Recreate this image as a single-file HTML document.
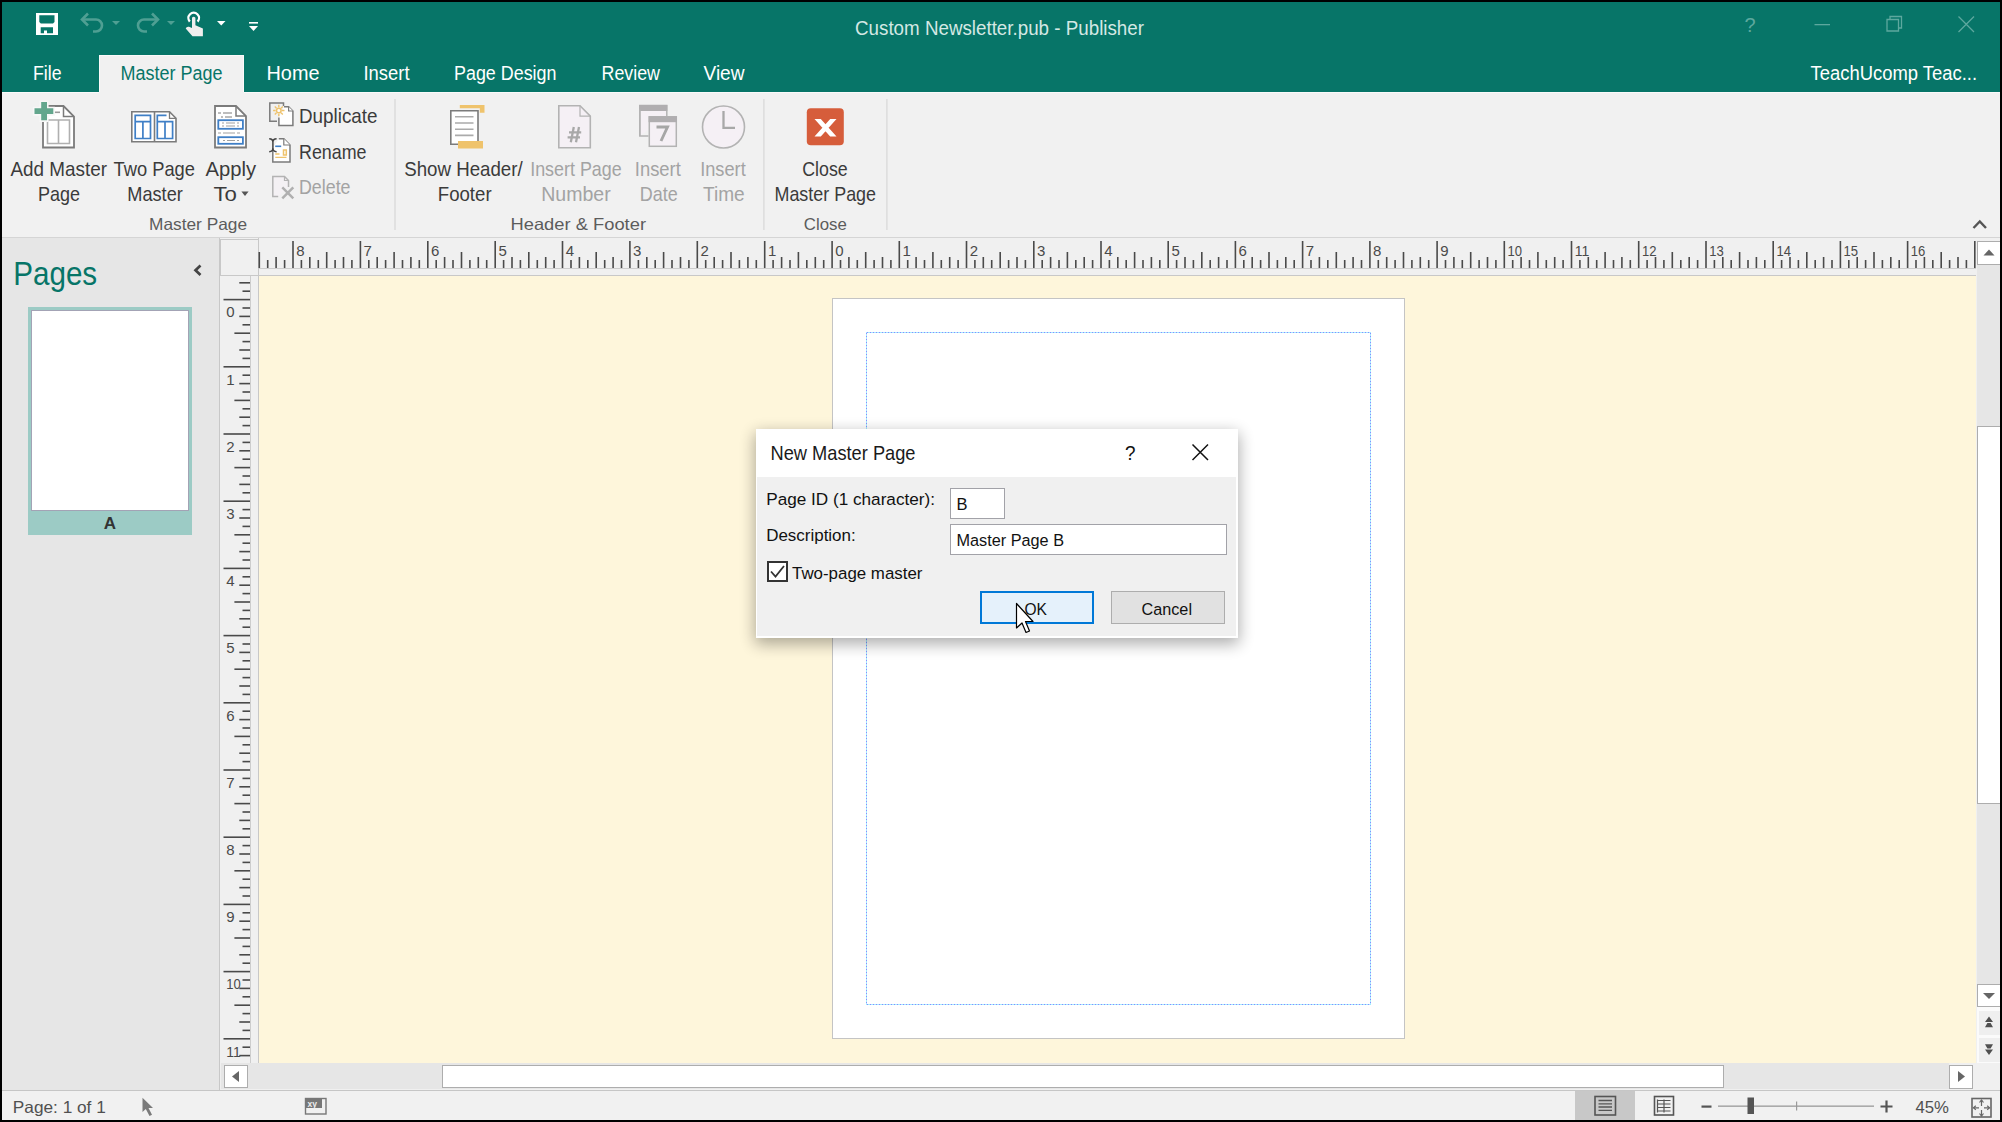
<!DOCTYPE html>
<html><head><meta charset="utf-8"><title>Publisher</title>
<style>html,body{margin:0;padding:0;overflow:hidden;background:#000;}
svg{display:block;font-family:"Liberation Sans", sans-serif;}</style></head>
<body><svg width="2002" height="1122" viewBox="0 0 2002 1122">
<rect x="0" y="0" width="2002" height="1122" fill="#000" />
<rect x="2" y="2" width="1998" height="90" fill="#077568" />
<rect x="99" y="55" width="145" height="38" fill="#fafafa" />
<rect x="100" y="56" width="143" height="37" fill="#f1f1f1" />
<rect x="2" y="92" width="1998" height="145" fill="#f1f1f1" />
<rect x="2" y="92" width="97" height="1" fill="#fafafa"/>
<rect x="244" y="92" width="1756" height="1" fill="#fafafa"/>
<rect x="2" y="237" width="1998" height="1" fill="#d5d5d5"/>
<rect x="2" y="238" width="218" height="852" fill="#e6e6e6" />
<rect x="219" y="238" width="1" height="852" fill="#c8c8c8"/>
<rect x="220" y="238" width="1780" height="852" fill="#f0f0f0" />
<rect x="2" y="1090" width="1998" height="1" fill="#c6c6c6"/>
<rect x="2" y="1091" width="1998" height="29" fill="#f1f1f1" />
<rect x="220" y="239" width="39" height="37" fill="#c8c8c8" />
<rect x="221" y="240" width="37" height="35" fill="#f0f0f0" />
<rect x="259" y="238" width="1718" height="38" fill="#f0f0f0" />
<rect x="259" y="268" width="1717" height="1" fill="#cdcdcd"/>
<rect x="220" y="275" width="1757" height="1" fill="#c8c8c8"/>
<rect x="250" y="276" width="1" height="787" fill="#cdcdcd"/>
<rect x="258" y="238" width="1" height="825" fill="#c8c8c8"/>
<rect x="259" y="276" width="1717" height="787" fill="#fef6db" />
<rect x="258.5" y="252" width="1.6" height="16" fill="#4a4a4a"/>
<rect x="266.9" y="260" width="1.6" height="8" fill="#4a4a4a"/>
<rect x="275.3" y="257" width="1.6" height="11" fill="#4a4a4a"/>
<rect x="283.8" y="260" width="1.6" height="8" fill="#4a4a4a"/>
<rect x="292.2" y="241" width="1.6" height="27" fill="#4a4a4a"/>
<rect x="300.6" y="260" width="1.6" height="8" fill="#4a4a4a"/>
<rect x="309.0" y="257" width="1.6" height="11" fill="#4a4a4a"/>
<rect x="317.5" y="260" width="1.6" height="8" fill="#4a4a4a"/>
<rect x="325.9" y="252" width="1.6" height="16" fill="#4a4a4a"/>
<rect x="334.3" y="260" width="1.6" height="8" fill="#4a4a4a"/>
<rect x="342.7" y="257" width="1.6" height="11" fill="#4a4a4a"/>
<rect x="351.1" y="260" width="1.6" height="8" fill="#4a4a4a"/>
<rect x="359.6" y="241" width="1.6" height="27" fill="#4a4a4a"/>
<rect x="368.0" y="260" width="1.6" height="8" fill="#4a4a4a"/>
<rect x="376.4" y="257" width="1.6" height="11" fill="#4a4a4a"/>
<rect x="384.8" y="260" width="1.6" height="8" fill="#4a4a4a"/>
<rect x="393.3" y="252" width="1.6" height="16" fill="#4a4a4a"/>
<rect x="401.7" y="260" width="1.6" height="8" fill="#4a4a4a"/>
<rect x="410.1" y="257" width="1.6" height="11" fill="#4a4a4a"/>
<rect x="418.5" y="260" width="1.6" height="8" fill="#4a4a4a"/>
<rect x="427.0" y="241" width="1.6" height="27" fill="#4a4a4a"/>
<rect x="435.4" y="260" width="1.6" height="8" fill="#4a4a4a"/>
<rect x="443.8" y="257" width="1.6" height="11" fill="#4a4a4a"/>
<rect x="452.2" y="260" width="1.6" height="8" fill="#4a4a4a"/>
<rect x="460.7" y="252" width="1.6" height="16" fill="#4a4a4a"/>
<rect x="469.1" y="260" width="1.6" height="8" fill="#4a4a4a"/>
<rect x="477.5" y="257" width="1.6" height="11" fill="#4a4a4a"/>
<rect x="485.9" y="260" width="1.6" height="8" fill="#4a4a4a"/>
<rect x="494.4" y="241" width="1.6" height="27" fill="#4a4a4a"/>
<rect x="502.8" y="260" width="1.6" height="8" fill="#4a4a4a"/>
<rect x="511.2" y="257" width="1.6" height="11" fill="#4a4a4a"/>
<rect x="519.6" y="260" width="1.6" height="8" fill="#4a4a4a"/>
<rect x="528.0" y="252" width="1.6" height="16" fill="#4a4a4a"/>
<rect x="536.5" y="260" width="1.6" height="8" fill="#4a4a4a"/>
<rect x="544.9" y="257" width="1.6" height="11" fill="#4a4a4a"/>
<rect x="553.3" y="260" width="1.6" height="8" fill="#4a4a4a"/>
<rect x="561.7" y="241" width="1.6" height="27" fill="#4a4a4a"/>
<rect x="570.2" y="260" width="1.6" height="8" fill="#4a4a4a"/>
<rect x="578.6" y="257" width="1.6" height="11" fill="#4a4a4a"/>
<rect x="587.0" y="260" width="1.6" height="8" fill="#4a4a4a"/>
<rect x="595.4" y="252" width="1.6" height="16" fill="#4a4a4a"/>
<rect x="603.9" y="260" width="1.6" height="8" fill="#4a4a4a"/>
<rect x="612.3" y="257" width="1.6" height="11" fill="#4a4a4a"/>
<rect x="620.7" y="260" width="1.6" height="8" fill="#4a4a4a"/>
<rect x="629.1" y="241" width="1.6" height="27" fill="#4a4a4a"/>
<rect x="637.6" y="260" width="1.6" height="8" fill="#4a4a4a"/>
<rect x="646.0" y="257" width="1.6" height="11" fill="#4a4a4a"/>
<rect x="654.4" y="260" width="1.6" height="8" fill="#4a4a4a"/>
<rect x="662.8" y="252" width="1.6" height="16" fill="#4a4a4a"/>
<rect x="671.2" y="260" width="1.6" height="8" fill="#4a4a4a"/>
<rect x="679.7" y="257" width="1.6" height="11" fill="#4a4a4a"/>
<rect x="688.1" y="260" width="1.6" height="8" fill="#4a4a4a"/>
<rect x="696.5" y="241" width="1.6" height="27" fill="#4a4a4a"/>
<rect x="704.9" y="260" width="1.6" height="8" fill="#4a4a4a"/>
<rect x="713.4" y="257" width="1.6" height="11" fill="#4a4a4a"/>
<rect x="721.8" y="260" width="1.6" height="8" fill="#4a4a4a"/>
<rect x="730.2" y="252" width="1.6" height="16" fill="#4a4a4a"/>
<rect x="738.6" y="260" width="1.6" height="8" fill="#4a4a4a"/>
<rect x="747.1" y="257" width="1.6" height="11" fill="#4a4a4a"/>
<rect x="755.5" y="260" width="1.6" height="8" fill="#4a4a4a"/>
<rect x="763.9" y="241" width="1.6" height="27" fill="#4a4a4a"/>
<rect x="772.3" y="260" width="1.6" height="8" fill="#4a4a4a"/>
<rect x="780.8" y="257" width="1.6" height="11" fill="#4a4a4a"/>
<rect x="789.2" y="260" width="1.6" height="8" fill="#4a4a4a"/>
<rect x="797.6" y="252" width="1.6" height="16" fill="#4a4a4a"/>
<rect x="806.0" y="260" width="1.6" height="8" fill="#4a4a4a"/>
<rect x="814.5" y="257" width="1.6" height="11" fill="#4a4a4a"/>
<rect x="822.9" y="260" width="1.6" height="8" fill="#4a4a4a"/>
<rect x="831.3" y="241" width="1.6" height="27" fill="#4a4a4a"/>
<rect x="839.7" y="260" width="1.6" height="8" fill="#4a4a4a"/>
<rect x="848.1" y="257" width="1.6" height="11" fill="#4a4a4a"/>
<rect x="856.5" y="260" width="1.6" height="8" fill="#4a4a4a"/>
<rect x="864.9" y="252" width="1.6" height="16" fill="#4a4a4a"/>
<rect x="873.3" y="260" width="1.6" height="8" fill="#4a4a4a"/>
<rect x="881.7" y="257" width="1.6" height="11" fill="#4a4a4a"/>
<rect x="890.1" y="260" width="1.6" height="8" fill="#4a4a4a"/>
<rect x="898.5" y="241" width="1.6" height="27" fill="#4a4a4a"/>
<rect x="906.9" y="260" width="1.6" height="8" fill="#4a4a4a"/>
<rect x="915.3" y="257" width="1.6" height="11" fill="#4a4a4a"/>
<rect x="923.7" y="260" width="1.6" height="8" fill="#4a4a4a"/>
<rect x="932.1" y="252" width="1.6" height="16" fill="#4a4a4a"/>
<rect x="940.5" y="260" width="1.6" height="8" fill="#4a4a4a"/>
<rect x="948.9" y="257" width="1.6" height="11" fill="#4a4a4a"/>
<rect x="957.3" y="260" width="1.6" height="8" fill="#4a4a4a"/>
<rect x="965.7" y="241" width="1.6" height="27" fill="#4a4a4a"/>
<rect x="974.1" y="260" width="1.6" height="8" fill="#4a4a4a"/>
<rect x="982.5" y="257" width="1.6" height="11" fill="#4a4a4a"/>
<rect x="990.9" y="260" width="1.6" height="8" fill="#4a4a4a"/>
<rect x="999.4" y="252" width="1.6" height="16" fill="#4a4a4a"/>
<rect x="1007.8" y="260" width="1.6" height="8" fill="#4a4a4a"/>
<rect x="1016.2" y="257" width="1.6" height="11" fill="#4a4a4a"/>
<rect x="1024.6" y="260" width="1.6" height="8" fill="#4a4a4a"/>
<rect x="1033.0" y="241" width="1.6" height="27" fill="#4a4a4a"/>
<rect x="1041.4" y="260" width="1.6" height="8" fill="#4a4a4a"/>
<rect x="1049.8" y="257" width="1.6" height="11" fill="#4a4a4a"/>
<rect x="1058.2" y="260" width="1.6" height="8" fill="#4a4a4a"/>
<rect x="1066.6" y="252" width="1.6" height="16" fill="#4a4a4a"/>
<rect x="1075.0" y="260" width="1.6" height="8" fill="#4a4a4a"/>
<rect x="1083.4" y="257" width="1.6" height="11" fill="#4a4a4a"/>
<rect x="1091.8" y="260" width="1.6" height="8" fill="#4a4a4a"/>
<rect x="1100.2" y="241" width="1.6" height="27" fill="#4a4a4a"/>
<rect x="1108.6" y="260" width="1.6" height="8" fill="#4a4a4a"/>
<rect x="1117.0" y="257" width="1.6" height="11" fill="#4a4a4a"/>
<rect x="1125.4" y="260" width="1.6" height="8" fill="#4a4a4a"/>
<rect x="1133.8" y="252" width="1.6" height="16" fill="#4a4a4a"/>
<rect x="1142.2" y="260" width="1.6" height="8" fill="#4a4a4a"/>
<rect x="1150.6" y="257" width="1.6" height="11" fill="#4a4a4a"/>
<rect x="1159.0" y="260" width="1.6" height="8" fill="#4a4a4a"/>
<rect x="1167.4" y="241" width="1.6" height="27" fill="#4a4a4a"/>
<rect x="1175.8" y="260" width="1.6" height="8" fill="#4a4a4a"/>
<rect x="1184.2" y="257" width="1.6" height="11" fill="#4a4a4a"/>
<rect x="1192.6" y="260" width="1.6" height="8" fill="#4a4a4a"/>
<rect x="1201.0" y="252" width="1.6" height="16" fill="#4a4a4a"/>
<rect x="1209.4" y="260" width="1.6" height="8" fill="#4a4a4a"/>
<rect x="1217.8" y="257" width="1.6" height="11" fill="#4a4a4a"/>
<rect x="1226.2" y="260" width="1.6" height="8" fill="#4a4a4a"/>
<rect x="1234.6" y="241" width="1.6" height="27" fill="#4a4a4a"/>
<rect x="1243.0" y="260" width="1.6" height="8" fill="#4a4a4a"/>
<rect x="1251.4" y="257" width="1.6" height="11" fill="#4a4a4a"/>
<rect x="1259.8" y="260" width="1.6" height="8" fill="#4a4a4a"/>
<rect x="1268.2" y="252" width="1.6" height="16" fill="#4a4a4a"/>
<rect x="1276.6" y="260" width="1.6" height="8" fill="#4a4a4a"/>
<rect x="1285.0" y="257" width="1.6" height="11" fill="#4a4a4a"/>
<rect x="1293.4" y="260" width="1.6" height="8" fill="#4a4a4a"/>
<rect x="1301.8" y="241" width="1.6" height="27" fill="#4a4a4a"/>
<rect x="1310.2" y="260" width="1.6" height="8" fill="#4a4a4a"/>
<rect x="1318.6" y="257" width="1.6" height="11" fill="#4a4a4a"/>
<rect x="1327.0" y="260" width="1.6" height="8" fill="#4a4a4a"/>
<rect x="1335.5" y="252" width="1.6" height="16" fill="#4a4a4a"/>
<rect x="1343.9" y="260" width="1.6" height="8" fill="#4a4a4a"/>
<rect x="1352.3" y="257" width="1.6" height="11" fill="#4a4a4a"/>
<rect x="1360.7" y="260" width="1.6" height="8" fill="#4a4a4a"/>
<rect x="1369.1" y="241" width="1.6" height="27" fill="#4a4a4a"/>
<rect x="1377.5" y="260" width="1.6" height="8" fill="#4a4a4a"/>
<rect x="1385.9" y="257" width="1.6" height="11" fill="#4a4a4a"/>
<rect x="1394.3" y="260" width="1.6" height="8" fill="#4a4a4a"/>
<rect x="1402.7" y="252" width="1.6" height="16" fill="#4a4a4a"/>
<rect x="1411.1" y="260" width="1.6" height="8" fill="#4a4a4a"/>
<rect x="1419.5" y="257" width="1.6" height="11" fill="#4a4a4a"/>
<rect x="1427.9" y="260" width="1.6" height="8" fill="#4a4a4a"/>
<rect x="1436.3" y="241" width="1.6" height="27" fill="#4a4a4a"/>
<rect x="1444.7" y="260" width="1.6" height="8" fill="#4a4a4a"/>
<rect x="1453.1" y="257" width="1.6" height="11" fill="#4a4a4a"/>
<rect x="1461.5" y="260" width="1.6" height="8" fill="#4a4a4a"/>
<rect x="1469.9" y="252" width="1.6" height="16" fill="#4a4a4a"/>
<rect x="1478.3" y="260" width="1.6" height="8" fill="#4a4a4a"/>
<rect x="1486.7" y="257" width="1.6" height="11" fill="#4a4a4a"/>
<rect x="1495.1" y="260" width="1.6" height="8" fill="#4a4a4a"/>
<rect x="1503.5" y="241" width="1.6" height="27" fill="#4a4a4a"/>
<rect x="1511.9" y="260" width="1.6" height="8" fill="#4a4a4a"/>
<rect x="1520.3" y="257" width="1.6" height="11" fill="#4a4a4a"/>
<rect x="1528.7" y="260" width="1.6" height="8" fill="#4a4a4a"/>
<rect x="1537.1" y="252" width="1.6" height="16" fill="#4a4a4a"/>
<rect x="1545.5" y="260" width="1.6" height="8" fill="#4a4a4a"/>
<rect x="1553.9" y="257" width="1.6" height="11" fill="#4a4a4a"/>
<rect x="1562.3" y="260" width="1.6" height="8" fill="#4a4a4a"/>
<rect x="1570.7" y="241" width="1.6" height="27" fill="#4a4a4a"/>
<rect x="1579.1" y="260" width="1.6" height="8" fill="#4a4a4a"/>
<rect x="1587.5" y="257" width="1.6" height="11" fill="#4a4a4a"/>
<rect x="1595.9" y="260" width="1.6" height="8" fill="#4a4a4a"/>
<rect x="1604.3" y="252" width="1.6" height="16" fill="#4a4a4a"/>
<rect x="1612.7" y="260" width="1.6" height="8" fill="#4a4a4a"/>
<rect x="1621.1" y="257" width="1.6" height="11" fill="#4a4a4a"/>
<rect x="1629.5" y="260" width="1.6" height="8" fill="#4a4a4a"/>
<rect x="1637.9" y="241" width="1.6" height="27" fill="#4a4a4a"/>
<rect x="1646.3" y="260" width="1.6" height="8" fill="#4a4a4a"/>
<rect x="1654.7" y="257" width="1.6" height="11" fill="#4a4a4a"/>
<rect x="1663.1" y="260" width="1.6" height="8" fill="#4a4a4a"/>
<rect x="1671.5" y="252" width="1.6" height="16" fill="#4a4a4a"/>
<rect x="1680.0" y="260" width="1.6" height="8" fill="#4a4a4a"/>
<rect x="1688.4" y="257" width="1.6" height="11" fill="#4a4a4a"/>
<rect x="1696.8" y="260" width="1.6" height="8" fill="#4a4a4a"/>
<rect x="1705.2" y="241" width="1.6" height="27" fill="#4a4a4a"/>
<rect x="1713.6" y="260" width="1.6" height="8" fill="#4a4a4a"/>
<rect x="1722.0" y="257" width="1.6" height="11" fill="#4a4a4a"/>
<rect x="1730.4" y="260" width="1.6" height="8" fill="#4a4a4a"/>
<rect x="1738.8" y="252" width="1.6" height="16" fill="#4a4a4a"/>
<rect x="1747.2" y="260" width="1.6" height="8" fill="#4a4a4a"/>
<rect x="1755.6" y="257" width="1.6" height="11" fill="#4a4a4a"/>
<rect x="1764.0" y="260" width="1.6" height="8" fill="#4a4a4a"/>
<rect x="1772.4" y="241" width="1.6" height="27" fill="#4a4a4a"/>
<rect x="1780.8" y="260" width="1.6" height="8" fill="#4a4a4a"/>
<rect x="1789.2" y="257" width="1.6" height="11" fill="#4a4a4a"/>
<rect x="1797.6" y="260" width="1.6" height="8" fill="#4a4a4a"/>
<rect x="1806.0" y="252" width="1.6" height="16" fill="#4a4a4a"/>
<rect x="1814.4" y="260" width="1.6" height="8" fill="#4a4a4a"/>
<rect x="1822.8" y="257" width="1.6" height="11" fill="#4a4a4a"/>
<rect x="1831.2" y="260" width="1.6" height="8" fill="#4a4a4a"/>
<rect x="1839.6" y="241" width="1.6" height="27" fill="#4a4a4a"/>
<rect x="1848.0" y="260" width="1.6" height="8" fill="#4a4a4a"/>
<rect x="1856.4" y="257" width="1.6" height="11" fill="#4a4a4a"/>
<rect x="1864.8" y="260" width="1.6" height="8" fill="#4a4a4a"/>
<rect x="1873.2" y="252" width="1.6" height="16" fill="#4a4a4a"/>
<rect x="1881.6" y="260" width="1.6" height="8" fill="#4a4a4a"/>
<rect x="1890.0" y="257" width="1.6" height="11" fill="#4a4a4a"/>
<rect x="1898.4" y="260" width="1.6" height="8" fill="#4a4a4a"/>
<rect x="1906.8" y="241" width="1.6" height="27" fill="#4a4a4a"/>
<rect x="1915.2" y="260" width="1.6" height="8" fill="#4a4a4a"/>
<rect x="1923.6" y="257" width="1.6" height="11" fill="#4a4a4a"/>
<rect x="1932.0" y="260" width="1.6" height="8" fill="#4a4a4a"/>
<rect x="1940.4" y="252" width="1.6" height="16" fill="#4a4a4a"/>
<rect x="1948.8" y="260" width="1.6" height="8" fill="#4a4a4a"/>
<rect x="1957.2" y="257" width="1.6" height="11" fill="#4a4a4a"/>
<rect x="1965.6" y="260" width="1.6" height="8" fill="#4a4a4a"/>
<rect x="1974.0" y="241" width="1.6" height="27" fill="#4a4a4a"/>
<text x="296.2" y="255.6" font-size="15" fill="#4a4a4a" >8</text>
<text x="363.6" y="255.6" font-size="15" fill="#4a4a4a" >7</text>
<text x="431.0" y="255.6" font-size="15" fill="#4a4a4a" >6</text>
<text x="498.4" y="255.6" font-size="15" fill="#4a4a4a" >5</text>
<text x="565.7" y="255.6" font-size="15" fill="#4a4a4a" >4</text>
<text x="633.1" y="255.6" font-size="15" fill="#4a4a4a" >3</text>
<text x="700.5" y="255.6" font-size="15" fill="#4a4a4a" >2</text>
<text x="767.9" y="255.6" font-size="15" fill="#4a4a4a" >1</text>
<text x="835.3" y="255.6" font-size="15" fill="#4a4a4a" >0</text>
<text x="902.5" y="255.6" font-size="15" fill="#4a4a4a" >1</text>
<text x="969.7" y="255.6" font-size="15" fill="#4a4a4a" >2</text>
<text x="1037.0" y="255.6" font-size="15" fill="#4a4a4a" >3</text>
<text x="1104.2" y="255.6" font-size="15" fill="#4a4a4a" >4</text>
<text x="1171.4" y="255.6" font-size="15" fill="#4a4a4a" >5</text>
<text x="1238.6" y="255.6" font-size="15" fill="#4a4a4a" >6</text>
<text x="1305.8" y="255.6" font-size="15" fill="#4a4a4a" >7</text>
<text x="1373.1" y="255.6" font-size="15" fill="#4a4a4a" >8</text>
<text x="1440.3" y="255.6" font-size="15" fill="#4a4a4a" >9</text>
<text x="1507.5" y="255.6" font-size="15" fill="#4a4a4a" textLength="14.5" lengthAdjust="spacingAndGlyphs" >10</text>
<text x="1574.7" y="255.6" font-size="15" fill="#4a4a4a" textLength="14.5" lengthAdjust="spacingAndGlyphs" >11</text>
<text x="1641.9" y="255.6" font-size="15" fill="#4a4a4a" textLength="14.5" lengthAdjust="spacingAndGlyphs" >12</text>
<text x="1709.2" y="255.6" font-size="15" fill="#4a4a4a" textLength="14.5" lengthAdjust="spacingAndGlyphs" >13</text>
<text x="1776.4" y="255.6" font-size="15" fill="#4a4a4a" textLength="14.5" lengthAdjust="spacingAndGlyphs" >14</text>
<text x="1843.6" y="255.6" font-size="15" fill="#4a4a4a" textLength="14.5" lengthAdjust="spacingAndGlyphs" >15</text>
<text x="1910.8" y="255.6" font-size="15" fill="#4a4a4a" textLength="14.5" lengthAdjust="spacingAndGlyphs" >16</text>
<rect x="239.3" y="282.0" width="10.7" height="1.6" fill="#4a4a4a"/>
<rect x="242.5" y="290.4" width="7.5" height="1.6" fill="#4a4a4a"/>
<rect x="223.5" y="298.8" width="26.5" height="1.6" fill="#4a4a4a"/>
<rect x="242.5" y="307.2" width="7.5" height="1.6" fill="#4a4a4a"/>
<rect x="239.3" y="315.6" width="10.7" height="1.6" fill="#4a4a4a"/>
<rect x="242.5" y="324.0" width="7.5" height="1.6" fill="#4a4a4a"/>
<rect x="234.4" y="332.4" width="15.6" height="1.6" fill="#4a4a4a"/>
<rect x="242.5" y="340.8" width="7.5" height="1.6" fill="#4a4a4a"/>
<rect x="239.3" y="349.2" width="10.7" height="1.6" fill="#4a4a4a"/>
<rect x="242.5" y="357.6" width="7.5" height="1.6" fill="#4a4a4a"/>
<rect x="223.5" y="366.0" width="26.5" height="1.6" fill="#4a4a4a"/>
<rect x="242.5" y="374.4" width="7.5" height="1.6" fill="#4a4a4a"/>
<rect x="239.3" y="382.8" width="10.7" height="1.6" fill="#4a4a4a"/>
<rect x="242.5" y="391.2" width="7.5" height="1.6" fill="#4a4a4a"/>
<rect x="234.4" y="399.6" width="15.6" height="1.6" fill="#4a4a4a"/>
<rect x="242.5" y="408.0" width="7.5" height="1.6" fill="#4a4a4a"/>
<rect x="239.3" y="416.4" width="10.7" height="1.6" fill="#4a4a4a"/>
<rect x="242.5" y="424.8" width="7.5" height="1.6" fill="#4a4a4a"/>
<rect x="223.5" y="433.2" width="26.5" height="1.6" fill="#4a4a4a"/>
<rect x="242.5" y="441.6" width="7.5" height="1.6" fill="#4a4a4a"/>
<rect x="239.3" y="450.0" width="10.7" height="1.6" fill="#4a4a4a"/>
<rect x="242.5" y="458.4" width="7.5" height="1.6" fill="#4a4a4a"/>
<rect x="234.4" y="466.8" width="15.6" height="1.6" fill="#4a4a4a"/>
<rect x="242.5" y="475.2" width="7.5" height="1.6" fill="#4a4a4a"/>
<rect x="239.3" y="483.6" width="10.7" height="1.6" fill="#4a4a4a"/>
<rect x="242.5" y="492.0" width="7.5" height="1.6" fill="#4a4a4a"/>
<rect x="223.5" y="500.4" width="26.5" height="1.6" fill="#4a4a4a"/>
<rect x="242.5" y="508.8" width="7.5" height="1.6" fill="#4a4a4a"/>
<rect x="239.3" y="517.2" width="10.7" height="1.6" fill="#4a4a4a"/>
<rect x="242.5" y="525.6" width="7.5" height="1.6" fill="#4a4a4a"/>
<rect x="234.4" y="534.0" width="15.6" height="1.6" fill="#4a4a4a"/>
<rect x="242.5" y="542.4" width="7.5" height="1.6" fill="#4a4a4a"/>
<rect x="239.3" y="550.8" width="10.7" height="1.6" fill="#4a4a4a"/>
<rect x="242.5" y="559.2" width="7.5" height="1.6" fill="#4a4a4a"/>
<rect x="223.5" y="567.6" width="26.5" height="1.6" fill="#4a4a4a"/>
<rect x="242.5" y="576.0" width="7.5" height="1.6" fill="#4a4a4a"/>
<rect x="239.3" y="584.4" width="10.7" height="1.6" fill="#4a4a4a"/>
<rect x="242.5" y="592.8" width="7.5" height="1.6" fill="#4a4a4a"/>
<rect x="234.4" y="601.2" width="15.6" height="1.6" fill="#4a4a4a"/>
<rect x="242.5" y="609.6" width="7.5" height="1.6" fill="#4a4a4a"/>
<rect x="239.3" y="618.0" width="10.7" height="1.6" fill="#4a4a4a"/>
<rect x="242.5" y="626.4" width="7.5" height="1.6" fill="#4a4a4a"/>
<rect x="223.5" y="634.8" width="26.5" height="1.6" fill="#4a4a4a"/>
<rect x="242.5" y="643.2" width="7.5" height="1.6" fill="#4a4a4a"/>
<rect x="239.3" y="651.6" width="10.7" height="1.6" fill="#4a4a4a"/>
<rect x="242.5" y="660.0" width="7.5" height="1.6" fill="#4a4a4a"/>
<rect x="234.4" y="668.4" width="15.6" height="1.6" fill="#4a4a4a"/>
<rect x="242.5" y="676.8" width="7.5" height="1.6" fill="#4a4a4a"/>
<rect x="239.3" y="685.2" width="10.7" height="1.6" fill="#4a4a4a"/>
<rect x="242.5" y="693.6" width="7.5" height="1.6" fill="#4a4a4a"/>
<rect x="223.5" y="702.0" width="26.5" height="1.6" fill="#4a4a4a"/>
<rect x="242.5" y="710.4" width="7.5" height="1.6" fill="#4a4a4a"/>
<rect x="239.3" y="718.8" width="10.7" height="1.6" fill="#4a4a4a"/>
<rect x="242.5" y="727.2" width="7.5" height="1.6" fill="#4a4a4a"/>
<rect x="234.4" y="735.6" width="15.6" height="1.6" fill="#4a4a4a"/>
<rect x="242.5" y="744.0" width="7.5" height="1.6" fill="#4a4a4a"/>
<rect x="239.3" y="752.4" width="10.7" height="1.6" fill="#4a4a4a"/>
<rect x="242.5" y="760.8" width="7.5" height="1.6" fill="#4a4a4a"/>
<rect x="223.5" y="769.2" width="26.5" height="1.6" fill="#4a4a4a"/>
<rect x="242.5" y="777.6" width="7.5" height="1.6" fill="#4a4a4a"/>
<rect x="239.3" y="786.0" width="10.7" height="1.6" fill="#4a4a4a"/>
<rect x="242.5" y="794.4" width="7.5" height="1.6" fill="#4a4a4a"/>
<rect x="234.4" y="802.8" width="15.6" height="1.6" fill="#4a4a4a"/>
<rect x="242.5" y="811.2" width="7.5" height="1.6" fill="#4a4a4a"/>
<rect x="239.3" y="819.6" width="10.7" height="1.6" fill="#4a4a4a"/>
<rect x="242.5" y="828.0" width="7.5" height="1.6" fill="#4a4a4a"/>
<rect x="223.5" y="836.4" width="26.5" height="1.6" fill="#4a4a4a"/>
<rect x="242.5" y="844.8" width="7.5" height="1.6" fill="#4a4a4a"/>
<rect x="239.3" y="853.2" width="10.7" height="1.6" fill="#4a4a4a"/>
<rect x="242.5" y="861.6" width="7.5" height="1.6" fill="#4a4a4a"/>
<rect x="234.4" y="870.0" width="15.6" height="1.6" fill="#4a4a4a"/>
<rect x="242.5" y="878.4" width="7.5" height="1.6" fill="#4a4a4a"/>
<rect x="239.3" y="886.8" width="10.7" height="1.6" fill="#4a4a4a"/>
<rect x="242.5" y="895.2" width="7.5" height="1.6" fill="#4a4a4a"/>
<rect x="223.5" y="903.6" width="26.5" height="1.6" fill="#4a4a4a"/>
<rect x="242.5" y="912.0" width="7.5" height="1.6" fill="#4a4a4a"/>
<rect x="239.3" y="920.4" width="10.7" height="1.6" fill="#4a4a4a"/>
<rect x="242.5" y="928.8" width="7.5" height="1.6" fill="#4a4a4a"/>
<rect x="234.4" y="937.2" width="15.6" height="1.6" fill="#4a4a4a"/>
<rect x="242.5" y="945.6" width="7.5" height="1.6" fill="#4a4a4a"/>
<rect x="239.3" y="954.0" width="10.7" height="1.6" fill="#4a4a4a"/>
<rect x="242.5" y="962.4" width="7.5" height="1.6" fill="#4a4a4a"/>
<rect x="223.5" y="970.8" width="26.5" height="1.6" fill="#4a4a4a"/>
<rect x="242.5" y="979.2" width="7.5" height="1.6" fill="#4a4a4a"/>
<rect x="239.3" y="987.6" width="10.7" height="1.6" fill="#4a4a4a"/>
<rect x="242.5" y="996.0" width="7.5" height="1.6" fill="#4a4a4a"/>
<rect x="234.4" y="1004.4" width="15.6" height="1.6" fill="#4a4a4a"/>
<rect x="242.5" y="1012.8" width="7.5" height="1.6" fill="#4a4a4a"/>
<rect x="239.3" y="1021.2" width="10.7" height="1.6" fill="#4a4a4a"/>
<rect x="242.5" y="1029.6" width="7.5" height="1.6" fill="#4a4a4a"/>
<rect x="223.5" y="1038.0" width="26.5" height="1.6" fill="#4a4a4a"/>
<rect x="242.5" y="1046.4" width="7.5" height="1.6" fill="#4a4a4a"/>
<rect x="239.3" y="1054.8" width="10.7" height="1.6" fill="#4a4a4a"/>
<text x="226.2" y="317.4" font-size="15" fill="#4a4a4a" >0</text>
<text x="226.2" y="384.6" font-size="15" fill="#4a4a4a" >1</text>
<text x="226.2" y="451.8" font-size="15" fill="#4a4a4a" >2</text>
<text x="226.2" y="519.0" font-size="15" fill="#4a4a4a" >3</text>
<text x="226.2" y="586.2" font-size="15" fill="#4a4a4a" >4</text>
<text x="226.2" y="653.4" font-size="15" fill="#4a4a4a" >5</text>
<text x="226.2" y="720.6" font-size="15" fill="#4a4a4a" >6</text>
<text x="226.2" y="787.8" font-size="15" fill="#4a4a4a" >7</text>
<text x="226.2" y="855.0" font-size="15" fill="#4a4a4a" >8</text>
<text x="226.2" y="922.2" font-size="15" fill="#4a4a4a" >9</text>
<text x="226.2" y="989.4" font-size="15" fill="#4a4a4a" textLength="14.5" lengthAdjust="spacingAndGlyphs" >10</text>
<text x="226.2" y="1056.6" font-size="15" fill="#4a4a4a" textLength="14.5" lengthAdjust="spacingAndGlyphs" >11</text>
<rect x="832" y="298" width="573" height="741" fill="#c4c4c4" />
<rect x="833" y="299" width="571" height="739" fill="#ffffff" />
<defs><pattern id="gh" x="0" y="0" width="3" height="1" patternUnits="userSpaceOnUse"><rect width="3" height="1" fill="#a6ecff"/><rect width="1" height="1" fill="#8a8aff"/></pattern><pattern id="gv" x="0" y="0" width="1" height="3" patternUnits="userSpaceOnUse"><rect width="1" height="3" fill="#a6ecff"/><rect width="1" height="1" fill="#8a8aff"/></pattern></defs>
<g shape-rendering="crispEdges"><rect x="866" y="332" width="505" height="1" fill="url(#gh)"/><rect x="866" y="1004" width="505" height="1" fill="url(#gh)"/><rect x="866" y="332" width="1" height="673" fill="url(#gv)"/><rect x="1370" y="332" width="1" height="673" fill="url(#gv)"/></g>
<rect x="1977" y="238" width="23" height="825" fill="#e6e6e6" />
<rect x="1977" y="238" width="23" height="3" fill="#f0f0f0" />
<rect x="1976" y="238" width="1" height="825" fill="#f0f0f0"/>
<rect x="1977" y="241" width="24" height="24" fill="#adadad" />
<rect x="1978" y="242" width="22" height="22" fill="#ffffff" />
<path d="M1983.5 255.5 L1989 249.5 L1994.5 255.5 Z" fill="#666"/>
<rect x="1977" y="426" width="24" height="378" fill="#adadad" />
<rect x="1978" y="427" width="22" height="376" fill="#ffffff" />
<rect x="1977" y="984" width="24" height="23" fill="#adadad" />
<rect x="1978" y="985" width="22" height="21" fill="#ffffff" />
<path d="M1983 993 L1989 999 L1995 993 Z" fill="#666"/>
<rect x="1977" y="1007" width="23" height="56" fill="#fbfbfb" />
<rect x="1979" y="1011" width="21" height="24" fill="#efefef" />
<rect x="1979" y="1038" width="21" height="24" fill="#efefef" />
<path d="M1985 1022 L1989 1016.5 L1993 1022 Z M1985 1027.2 L1987.4 1023 H1990.6 L1993 1027.2 Z" fill="#505050"/>
<path d="M1985 1044.3 H1993 L1990.6 1048.5 H1987.4 Z M1985 1049.5 H1993 L1989 1055 Z" fill="#505050"/>
<rect x="220" y="1063" width="1780" height="27" fill="#f0f0f0" />
<rect x="221" y="1063" width="1728" height="26" fill="#e6e6e6" />
<rect x="224" y="1065" width="24" height="23" fill="#adadad" />
<rect x="225" y="1066" width="22" height="21" fill="#ffffff" />
<path d="M239 1071 L232 1076.5 L239 1082 Z" fill="#666"/>
<rect x="442" y="1065" width="1282" height="23" fill="#adadad" />
<rect x="443" y="1066" width="1280" height="21" fill="#ffffff" />
<rect x="1949" y="1065" width="24" height="24" fill="#adadad" />
<rect x="1950" y="1066" width="22" height="22" fill="#ffffff" />
<path d="M1958 1071 L1965 1076.5 L1958 1082 Z" fill="#666"/>
<text x="13.2" y="284.6" font-size="33.5" fill="#077568" textLength="84" lengthAdjust="spacingAndGlyphs" >Pages</text>
<path d="M200.5 265.5 L195.5 270.2 L200.5 275" fill="none" stroke="#444" stroke-width="2.7"/>
<rect x="28" y="307" width="164" height="228" fill="#9ccbc5" />
<rect x="31" y="310" width="158" height="201" fill="#a3a3b5" />
<rect x="32" y="311" width="156" height="199" fill="#ffffff" />
<text x="110" y="529" font-size="17" fill="#333333" text-anchor="middle" font-weight="bold" >A</text>
<rect x="36" y="13" width="22" height="22" fill="#fff"/>
<path d="M39.3 15.3 H54.5 V22 L53 23.5 H40.8 L39.3 22 Z" fill="#077568"/>
<path d="M40.7 27.3 H53 V33.2 H47 V30.5 H44 V33.2 H40.7 Z" fill="#077568"/>
<path d="M83 19.5 H96 A6 6 0 0 1 96 31.5 H93" fill="none" stroke="#4f9f93" stroke-width="2.6"/>
<path d="M88 13.5 L82 19.5 L88 25.5" fill="none" stroke="#4f9f93" stroke-width="2.6"/>
<path d="M112 21 L120 21 L116 25 Z" fill="#4f9f93"/>
<path d="M157 19.5 H144 A6 6 0 0 0 144 31.5 H147" fill="none" stroke="#4f9f93" stroke-width="2.6"/>
<path d="M152 13.5 L158 19.5 L152 25.5" fill="none" stroke="#4f9f93" stroke-width="2.6"/>
<path d="M167 21 L175 21 L171 25 Z" fill="#4f9f93"/>
<path d="M189.8 21.6 A5.3 5.3 0 1 1 197.6 21.6" fill="none" stroke="#fff" stroke-width="2.3"/>
<path d="M192 17.8 Q193.7 15.8 195.4 17.8 V25.3 L202.9 28.6 V36.3 H192.5 L185.7 28.6 Q186.5 26.3 189 26.8 L192 28 Z" fill="#f0eeee"/>
<path d="M217 21 L225.5 21 L221.25 25.5 Z" fill="#fff"/>
<rect x="249" y="22" width="9" height="1.6" fill="#fff"/>
<path d="M249 26 L258 26 L253.5 31 Z" fill="#fff"/>
<text x="855" y="34.9" font-size="19.5" fill="#d4e8e4" textLength="289" lengthAdjust="spacingAndGlyphs" >Custom Newsletter.pub - Publisher</text>
<text x="1744.5" y="31.5" font-size="20" fill="#5da89e" >?</text>
<rect x="1814.5" y="24" width="15.5" height="1.3" fill="#5da89e"/>
<path d="M1887 19.5 H1898.5 V31 H1887 Z M1890 19.5 V16.5 H1901.5 V28 H1898.5" fill="none" stroke="#5da89e" stroke-width="1.3"/>
<path d="M1958.5 16.5 L1974 32 M1974 16.5 L1958.5 32" fill="none" stroke="#5da89e" stroke-width="1.3"/>
<text x="33" y="79.6" font-size="19.6" fill="#ffffff" textLength="28.5" lengthAdjust="spacingAndGlyphs" >File</text>
<text x="120.5" y="79.6" font-size="19.6" fill="#077568" textLength="102" lengthAdjust="spacingAndGlyphs" >Master Page</text>
<text x="266.5" y="79.6" font-size="19.6" fill="#ffffff" textLength="53" lengthAdjust="spacingAndGlyphs" >Home</text>
<text x="363.5" y="79.6" font-size="19.6" fill="#ffffff" textLength="46" lengthAdjust="spacingAndGlyphs" >Insert</text>
<text x="454" y="79.6" font-size="19.6" fill="#ffffff" textLength="102.5" lengthAdjust="spacingAndGlyphs" >Page Design</text>
<text x="601.5" y="79.6" font-size="19.6" fill="#ffffff" textLength="58.5" lengthAdjust="spacingAndGlyphs" >Review</text>
<text x="703.5" y="79.6" font-size="19.6" fill="#ffffff" textLength="41" lengthAdjust="spacingAndGlyphs" >View</text>
<text x="1810.5" y="79.6" font-size="19.6" fill="#ffffff" textLength="166.5" lengthAdjust="spacingAndGlyphs" >TeachUcomp Teac...</text>
<path d="M43 106 H63.5 L74 116.5 V147.5 H43 Z" fill="#fff" stroke="#7b7b7b" stroke-width="1.8"/>
<path d="M63.5 106 V116.5 H74" fill="none" stroke="#7b7b7b" stroke-width="1.5"/>
<path d="M47.5 120 H69.5 V143.5 H47.5 Z M58.5 120 V143.5" fill="none" stroke="#b0b0b0" stroke-width="1.6"/>
<rect x="54.5" y="111.5" width="5.5" height="1.6" fill="#9a9a9a"/>
<path d="M41.2 102 H47 V108.3 H53.3 V114.1 H47 V120.3 H41.2 V114.1 H34.5 V108.3 H41.2 Z" fill="#63a68d" stroke="#f7f7f7" stroke-width="3.2" paint-order="stroke"/>
<text x="10.5" y="175.7" font-size="20.3" fill="#3b3b3b" textLength="96.5" lengthAdjust="spacingAndGlyphs" >Add Master</text>
<text x="59" y="200.9" font-size="20.3" fill="#3b3b3b" textLength="42" lengthAdjust="spacingAndGlyphs" text-anchor="middle" >Page</text>
<path d="M131.8 111.8 H169.5 L176 118.3 V141.8 H131.8 Z M154.5 111.8 V141.8" fill="#fff" stroke="#7b7b7b" stroke-width="1.6"/>
<path d="M169.5 111.8 V118.3 H176" fill="none" stroke="#7b7b7b" stroke-width="1.3"/>
<path d="M135.2 115.3 H150.5 V138.5 H135.2 Z M135.2 121.6 H150.5 M142.9 121.6 V138.5" fill="none" stroke="#3f7fc6" stroke-width="1.7"/>
<path d="M157.3 138.5 V115.3 H166.5 M157.3 121.6 H172.6 V138.5 H157.3 Z M165 121.6 V138.5" fill="none" stroke="#3f7fc6" stroke-width="1.7"/>
<text x="113.5" y="175.7" font-size="20.3" fill="#3b3b3b" textLength="81.5" lengthAdjust="spacingAndGlyphs" >Two Page</text>
<text x="127.3" y="200.9" font-size="20.3" fill="#3b3b3b" textLength="55.5" lengthAdjust="spacingAndGlyphs" >Master</text>
<path d="M215 106 H236 L246 116 V147.5 H215 Z" fill="#fff" stroke="#7b7b7b" stroke-width="1.8"/>
<path d="M236 106 V116 H246" fill="none" stroke="#7b7b7b" stroke-width="1.5"/>
<path d="M218 113 H221 M223 113 H232 M221 117 H223 M225 117 H232" stroke="#a8a8a8" stroke-width="1.3"/>
<rect x="218.3" y="120.2" width="24.6" height="8.6" fill="none" stroke="#3f7fc6" stroke-width="1.8"/>
<rect x="218.3" y="137.2" width="24.6" height="6.6" fill="none" stroke="#3f7fc6" stroke-width="1.8"/>
<path d="M222 123 H224 M226 123 H235 M237 123 H239 M222 126 H224 M226 126 H235 M237 126 H239 M218 133 H221 M223 133 H235 M237 133 H240 M223 140.5 H225 M227 140.5 H235 M237 140.5 H239" stroke="#a0a0a0" stroke-width="1.2"/>
<text x="205.5" y="175.7" font-size="20.3" fill="#3b3b3b" textLength="50.5" lengthAdjust="spacingAndGlyphs" >Apply</text>
<text x="213.5" y="200.9" font-size="20.3" fill="#3b3b3b" textLength="23.5" lengthAdjust="spacingAndGlyphs" >To</text>
<path d="M241.4 191.6 H248.6 L245 196 Z" fill="#555"/>
<path d="M277 121.2 H269.8 V102.9 H283.5 V106" fill="none" stroke="#7b7b7b" stroke-width="1.5"/>
<path d="M278.9 117.5 V125.6 H292.9 V111 L288.6 106.8 H284" fill="#fff" stroke="#7b7b7b" stroke-width="1.5"/>
<path d="M288.6 106.8 V111 H292.9" fill="#fff" stroke="#7b7b7b" stroke-width="1.2"/>
<g stroke="#efc36c" stroke-width="1.4"><path d="M278.8 104.8 V107.3 M278.8 113.7 V116.2 M273.1 110.5 H275.6 M282 110.5 H284.5 M274.8 106.5 L276.5 108.2 M281.1 112.8 L282.8 114.5 M282.8 106.5 L281.1 108.2 M276.5 112.8 L274.8 114.5"/></g>
<circle cx="278.8" cy="110.5" r="2.3" fill="#fff" stroke="#efc36c" stroke-width="1.5"/>
<text x="299" y="122.5" font-size="20.3" fill="#3b3b3b" textLength="78.5" lengthAdjust="spacingAndGlyphs" >Duplicate</text>
<path d="M278.8 138.8 H283.8 L290 145 V161.9 H272.8 V148" fill="#fff" stroke="#7b7b7b" stroke-width="1.5"/>
<path d="M283.8 138.8 V145 H290" fill="#fff" stroke="#7b7b7b" stroke-width="1.2"/>
<path d="M269.2 138.8 Q272.9 139 272.9 142 Q272.9 139 276.6 138.8 M272.9 142 V148.5 M269.2 151.7 Q272.9 151.5 272.9 148.5 Q272.9 151.5 276.6 151.7" fill="none" stroke="#444" stroke-width="1.5"/>
<rect x="275.2" y="145.5" width="6" height="1.6" fill="#3f7fc6"/>
<path d="M283.5 150 H286.3 V155 H283.5 Z" fill="none" stroke="#efc36c" stroke-width="1.5"/>
<path d="M275.3 154 H279.5 M275.3 157.4 H286.5" stroke="#efc36c" stroke-width="1.4"/>
<text x="299" y="158.6" font-size="20.3" fill="#3b3b3b" textLength="67.5" lengthAdjust="spacingAndGlyphs" >Rename</text>
<path d="M278.2 196.5 H272.8 V176.5 H284.5 L288.5 180.5 V187" fill="#f4f1f4" stroke="#b3b3b3" stroke-width="1.5"/>
<path d="M284.5 176.5 V180.5 H288.5" fill="none" stroke="#b3b3b3" stroke-width="1.2"/>
<path d="M282.3 187.3 L293.3 198.3 M293.3 187.3 L282.3 198.3" stroke="#b0b0b0" stroke-width="2.5"/>
<text x="299" y="194.2" font-size="20.3" fill="#a3a3a3" textLength="51.5" lengthAdjust="spacingAndGlyphs" >Delete</text>
<text x="149" y="229.7" font-size="16.5" fill="#5c5c5c" textLength="98" lengthAdjust="spacingAndGlyphs" >Master Page</text>
<rect x="394.5" y="99" width="1" height="131" fill="#d2d2d2"/>
<path d="M459.8 105 H484.5 V112.7 H479.8 V108.2 H459.8 Z" fill="#efc36c"/>
<path d="M450.8 110.8 H478 V144.2 H450.8 Z" fill="#fff" stroke="#7b7b7b" stroke-width="1.6"/>
<path d="M455 116.8 H473.5 M455 123 H473.5 M455 129.2 H473.5 M455 135.4 H473.5" stroke="#ababab" stroke-width="1.6"/>
<rect x="458" y="141" width="25" height="7.5" fill="#efc36c"/>
<text x="404.2" y="175.7" font-size="20.3" fill="#3b3b3b" textLength="118.5" lengthAdjust="spacingAndGlyphs" >Show Header/</text>
<text x="437.8" y="200.9" font-size="20.3" fill="#3b3b3b" textLength="53.8" lengthAdjust="spacingAndGlyphs" >Footer</text>
<path d="M558.8 105.8 H580 L590.3 116.1 V147.8 H558.8 Z" fill="#f5f0f5" stroke="#b3b3b3" stroke-width="1.6"/>
<path d="M580 105.8 V116.1 H590.3" fill="none" stroke="#b3b3b3" stroke-width="1.2"/>
<path d="M573.8 127 L570.8 142.3 M579 127 L576 142.3 M569 132.3 H581.2 M567.6 137.3 H580" stroke="#a8a8a8" stroke-width="2.3"/>
<text x="530.2" y="175.7" font-size="20.3" fill="#a3a3a3" textLength="91.5" lengthAdjust="spacingAndGlyphs" >Insert Page</text>
<text x="541.2" y="200.9" font-size="20.3" fill="#a3a3a3" textLength="69.5" lengthAdjust="spacingAndGlyphs" >Number</text>
<path d="M639.8 136 V105.5 H666.8 V116" fill="#f5f0f5" stroke="#b3b3b3" stroke-width="1.5"/>
<rect x="639.3" y="105" width="28" height="6" fill="#b0aeb0"/>
<path d="M639.8 109 V136 H648.5" fill="none" stroke="#b3b3b3" stroke-width="1.5"/>
<rect x="649.3" y="116.8" width="27" height="29.5" fill="#f5f0f5" stroke="#b3b3b3" stroke-width="1.5"/>
<rect x="648.6" y="116.2" width="28.4" height="6" fill="#b0aeb0"/>
<path d="M656.5 127 H667.5 L661 141" fill="none" stroke="#a6a6a6" stroke-width="2.9"/>
<text x="634.8" y="175.7" font-size="20.3" fill="#a3a3a3" textLength="46" lengthAdjust="spacingAndGlyphs" >Insert</text>
<text x="639.7" y="200.9" font-size="20.3" fill="#a3a3a3" textLength="38" lengthAdjust="spacingAndGlyphs" >Date</text>
<circle cx="723.5" cy="127" r="21" fill="#f5f0f5" stroke="#b3b3b3" stroke-width="1.6"/>
<path d="M723.5 111 V127.8 H735" fill="none" stroke="#a8a8a8" stroke-width="2.3"/>
<text x="700.2" y="175.7" font-size="20.3" fill="#a3a3a3" textLength="45.5" lengthAdjust="spacingAndGlyphs" >Insert</text>
<text x="703" y="200.9" font-size="20.3" fill="#a3a3a3" textLength="41.7" lengthAdjust="spacingAndGlyphs" >Time</text>
<text x="510.5" y="229.7" font-size="16.5" fill="#5c5c5c" textLength="135.5" lengthAdjust="spacingAndGlyphs" >Header &amp; Footer</text>
<rect x="763.4" y="99" width="1" height="131" fill="#d2d2d2"/>
<rect x="806.8" y="108.3" width="37" height="37" rx="4" fill="#d65d3b"/>
<path d="M814.5 119 H820.8 L836.5 136.5 H830.2 Z M830.2 119 H836.5 L820.8 136.5 H814.5 Z" fill="#fff"/>
<text x="802.2" y="175.7" font-size="20.3" fill="#3b3b3b" textLength="45.5" lengthAdjust="spacingAndGlyphs" >Close</text>
<text x="774.5" y="200.9" font-size="20.3" fill="#3b3b3b" textLength="101.5" lengthAdjust="spacingAndGlyphs" >Master Page</text>
<text x="803.8" y="229.7" font-size="16.5" fill="#5c5c5c" textLength="43" lengthAdjust="spacingAndGlyphs" >Close</text>
<rect x="886.4" y="99" width="1" height="131" fill="#d2d2d2"/>
<path d="M1973.5 228 L1979.8 221.5 L1986 228" fill="none" stroke="#555" stroke-width="2.4"/>
<defs><filter id="sh" x="-20%" y="-30%" width="140%" height="170%"><feGaussianBlur stdDeviation="8"/></filter></defs>
<rect x="755" y="433" width="484" height="211" fill="#000" opacity="0.32" filter="url(#sh)"/>
<rect x="756" y="429" width="482" height="209" fill="#ffffff" />
<rect x="756" y="428" width="482" height="210" fill="none" stroke="#e2e2e2" stroke-width="1" transform="translate(0.5 0.5) scale(1)" opacity="0"/>
<rect x="757" y="477" width="479" height="159" fill="#f0f0f0" />
<text x="770.5" y="460.2" font-size="19.8" fill="#1a1a1a" textLength="145" lengthAdjust="spacingAndGlyphs" >New Master Page</text>
<text x="1125" y="460" font-size="21" fill="#111" textLength="10.5" lengthAdjust="spacingAndGlyphs" >?</text>
<path d="M1192.5 444.5 L1208 460 M1208 444.5 L1192.5 460" stroke="#111" stroke-width="1.5"/>
<text x="766.2" y="505.2" font-size="17.2" fill="#111" textLength="168.8" lengthAdjust="spacingAndGlyphs" >Page ID (1 character):</text>
<text x="766.2" y="540.8" font-size="17.2" fill="#111" textLength="89.5" lengthAdjust="spacingAndGlyphs" >Description:</text>
<rect x="950" y="488" width="55" height="31" fill="#a2a2a8" />
<rect x="951" y="489" width="53" height="29" fill="#ffffff" />
<text x="956.5" y="510.3" font-size="17.2" fill="#111" textLength="11" lengthAdjust="spacingAndGlyphs" >B</text>
<rect x="950" y="524" width="277" height="31" fill="#a2a2a8" />
<rect x="951" y="525" width="275" height="29" fill="#ffffff" />
<text x="956.5" y="546" font-size="17.2" fill="#111" textLength="107.5" lengthAdjust="spacingAndGlyphs" >Master Page B</text>
<rect x="767" y="561" width="21" height="21" fill="#333333" />
<rect x="769" y="563" width="17" height="17" fill="#ffffff" />
<path d="M771 571.5 L775.5 576.5 L784 566" fill="none" stroke="#333" stroke-width="1.8"/>
<text x="792" y="578.8" font-size="17.2" fill="#111" textLength="130.5" lengthAdjust="spacingAndGlyphs" >Two-page master</text>
<rect x="980" y="591" width="114" height="33" fill="#0078d7" />
<rect x="982" y="593" width="110" height="29" fill="#e5f1fb" />
<text x="1024.5" y="614.5" font-size="17.2" fill="#111" textLength="22.5" lengthAdjust="spacingAndGlyphs" >OK</text>
<rect x="1111" y="591" width="114" height="33" fill="#adadad" />
<rect x="1112" y="592" width="112" height="31" fill="#e1e1e1" />
<text x="1141.5" y="614.5" font-size="17.2" fill="#111" textLength="50.5" lengthAdjust="spacingAndGlyphs" >Cancel</text>
<path d="M1016.5 603.5 V628 L1022 623 L1026 632.5 L1029.5 631 L1025.5 621.5 H1033 Z" fill="#fff" stroke="#000" stroke-width="1.2" stroke-linejoin="round"/>
<text x="12.8" y="1112.6" font-size="16.5" fill="#505050" textLength="93" lengthAdjust="spacingAndGlyphs" >Page: 1 of 1</text>
<path d="M142.5 1097.8 V1112 L145.8 1109 L149.5 1116 L152 1114.8 L148.5 1108 H153 Z" fill="#7a7a7a"/>
<rect x="305.5" y="1098.5" width="20.5" height="15.5" fill="none" stroke="#777" stroke-width="1.4"/>
<rect x="306" y="1099" width="16" height="9" fill="#777"/>
<text x="307.5" y="1106.5" font-size="8.5" fill="#eee" font-weight="bold">xy</text>
<rect x="1575" y="1091" width="60" height="29" fill="#c8c8c8" />
<rect x="1595" y="1096.5" width="20.5" height="18.5" fill="none" stroke="#555" stroke-width="1.6"/>
<path d="M1598.5 1100.5 H1612 M1598.5 1103.8 H1612 M1598.5 1107 H1612 M1598.5 1110.3 H1612" stroke="#555" stroke-width="1.3"/>
<rect x="1654.5" y="1096.5" width="19" height="18.5" fill="none" stroke="#555" stroke-width="1.6"/>
<path d="M1657.5 1100.5 H1670.5 M1657.5 1104 H1670.5 M1657.5 1107.5 H1670.5 M1657.5 1111 H1670.5 M1664 1099.5 V1112.5 M1657.5 1099.5 V1112.5" stroke="#555" stroke-width="1.2"/>
<rect x="1701.5" y="1105.5" width="10" height="2.2" fill="#555"/>
<rect x="1718" y="1105.5" width="156" height="1.3" fill="#9a9a9a"/>
<rect x="1796" y="1101.5" width="1.2" height="9" fill="#9a9a9a"/>
<rect x="1747.5" y="1097.5" width="6.5" height="16.5" fill="#555"/>
<path d="M1880.5 1106.5 H1892.5 M1886.5 1100.5 V1112.5" stroke="#555" stroke-width="2.2"/>
<text x="1915.5" y="1113" font-size="16.5" fill="#505050" textLength="33.5" lengthAdjust="spacingAndGlyphs" >45%</text>
<rect x="1972" y="1098.5" width="19" height="18.5" fill="none" stroke="#666" stroke-width="1.6"/>
<path d="M1981.5 1100 V1106 M1981.5 1110 V1116 M1973.5 1107.8 H1979 M1984 1107.8 H1989.5" stroke="#666" stroke-width="1.2"/>
<path d="M1979.5 1102.5 L1981.5 1100 L1983.5 1102.5 M1979.5 1113.5 L1981.5 1116 L1983.5 1113.5 M1975.8 1105.8 L1973.5 1107.8 L1975.8 1109.8 M1987.2 1105.8 L1989.5 1107.8 L1987.2 1109.8" fill="none" stroke="#666" stroke-width="1.2"/>
<rect x="0" y="0" width="2002" height="2" fill="#000" />
<rect x="0" y="1120" width="2002" height="2" fill="#000" />
<rect x="0" y="0" width="2" height="1122" fill="#000" />
<rect x="2000" y="0" width="2" height="1122" fill="#000" />
</svg></body></html>
